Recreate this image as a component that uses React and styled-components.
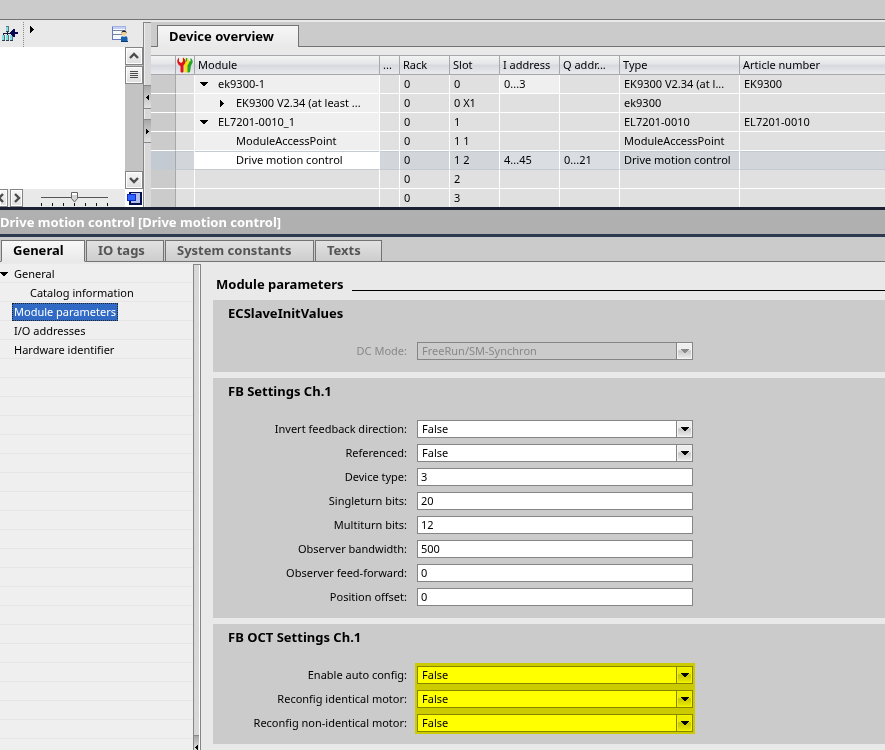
import React, { useState } from 'react';
import styled, { createGlobalStyle, css } from 'styled-components';

const modules = [
  { name: 'ek9300-1', level: 1, open: true, rack: '0', slot: '0', input: '0...3', output: '', type: 'EK9300 V2.34 (at l...', article: 'EK9300' },
  { name: 'EK9300 V2.34 (at least ...', level: 2, open: false, rack: '0', slot: '0 X1', input: '', output: '', type: 'ek9300', article: '' },
  { name: 'EL7201-0010_1', level: 1, open: true, rack: '0', slot: '1', input: '', output: '', type: 'EL7201-0010', article: 'EL7201-0010' },
  { name: 'ModuleAccessPoint', level: 2, rack: '0', slot: '1 1', input: '', output: '', type: 'ModuleAccessPoint', article: '' },
  { name: 'Drive motion control', level: 2, rack: '0', slot: '1 2', input: '4...45', output: '0...21', type: 'Drive motion control', article: '', selected: true },
  { name: '', rack: '0', slot: '2', input: '', output: '', type: '', article: '' },
  { name: '', rack: '0', slot: '3', input: '', output: '', type: '', article: '' },
];

const tabs = [
  { name: 'General', width: 84 },
  { name: 'IO tags', width: 78 },
  { name: 'System constants', width: 149 },
  { name: 'Texts', width: 67 },
];

const navItems = [
  { name: 'General', open: true },
  { name: 'Catalog information', child: true },
  { name: 'Module parameters' },
  { name: 'I/O addresses' },
  { name: 'Hardware identifier' },
];

const sections = [
  {
    title: 'ECSlaveInitValues',
    fields: [{ id: 'dc-mode', label: 'DC Mode:', options: ['FreeRun/SM-Synchron'], disabled: true }],
  },
  {
    title: 'FB Settings Ch.1',
    fields: [
      { id: 'invert', label: 'Invert feedback direction:', options: ['False', 'True'] },
      { id: 'referenced', label: 'Referenced:', options: ['False', 'True'] },
      { id: 'device-type', label: 'Device type:', value: '3' },
      { id: 'singleturn', label: 'Singleturn bits:', value: '20' },
      { id: 'multiturn', label: 'Multiturn bits:', value: '12' },
      { id: 'bandwidth', label: 'Observer bandwidth:', value: '500' },
      { id: 'feed-forward', label: 'Observer feed-forward:', value: '0' },
      { id: 'offset', label: 'Position offset:', value: '0' },
    ],
  },
  {
    title: 'FB OCT Settings Ch.1',
    marked: true,
    fields: [
      { id: 'auto-config', label: 'Enable auto config:', options: ['False', 'True'] },
      { id: 'identical', label: 'Reconfig identical motor:', options: ['False', 'True'] },
      { id: 'non-identical', label: 'Reconfig non-identical motor:', options: ['False', 'True'] },
    ],
  },
];

const arrows = {
  down: { w: 8, h: 4, d: 'M0 0h8v1h-1v1h-1v1h-1v1h-2v-1h-1v-1h-1v-1h-1z' },
  right: { w: 4, h: 7, d: 'M0 0h1v1h1v1h1v1h1v1h-1v1h-1v1h-1v1h-1z' },
  left: { w: 3, h: 5, d: 'M3 0v5h-1v-1h-1v-1h-1v-1h1v-1h1v-1z' },
  smallRight: { w: 3, h: 5, d: 'M0 0v5h1v-1h1v-1h1v-1h-1v-1h-1v-1z' },
};

const Arrow = ({ dir = 'down' }) => {
  const { w, h, d } = arrows[dir];
  return (
    <svg width={w} height={h} viewBox={`0 0 ${w} ${h}`} fill="currentColor" shapeRendering="crispEdges" aria-hidden="true">
      <path d={d} />
    </svg>
  );
};

const Chevron = ({ d }) => (
  <svg width="12" height="12" viewBox="0 0 12 12" fill="none" stroke="#4c4c4c" strokeWidth="2.4" aria-hidden="true">
    <path d={d} />
  </svg>
);

const NetworkIcon = () => (
  <svg width="16" height="16" viewBox="0 0 16 16" shapeRendering="crispEdges" aria-hidden="true">
    <path d="M4 0h2v5H4zM0 9h2v5H0zM4 9h2v5H4zM8 9h2v5H8z" fill="#7fe0e2" />
    <path d="M4 0h3v1H4zM6 1h1v4H6zM2 9h1v5H2zM6 9h1v5H6zM10 9h1v5h-1z" fill="#5c7480" />
    <path d="M0 14h3v1H0zM4 14h3v1H4zM8 14h3v1H8zM4 5h3v1H4z" fill="#2d3f50" />
    <path d="M5 6h1v3H5zM1 7h8v1H1zM1 8h1v1H1zM9 8h1v1H9z" fill="#111c3c" />
    <path d="M8 6h1V5h1V4h1V3h2v3h3v2h-3v3h-2v-1h-1V9H9V8H8z" fill="#08084e" />
  </svg>
);

const UserViewIcon = () => (
  <svg width="16" height="16" viewBox="0 0 16 16" aria-hidden="true">
    <path d="M0 0h14v14H0z" fill="#f5f8ff" />
    <path d="M0 0h14v3H0z" fill="#c3d0f4" />
    <path d="M.5 0v14M0 13.5h10" stroke="#6577bd" />
    <path d="M0 .5h14M13.5 0v6" stroke="#9fb0e2" />
    <path d="M1 4.500h12M1 8.500h9" stroke="#7a8694" />
    <circle cx="12" cy="7.500" r="2.400" fill="#f0cf91" />
    <path d="M9.500 7.500c-.5-4 5.500-4 5 0l-1-1.500h-3z" fill="#222" />
    <path d="M9 15v-3c0-2 1.500-2 3-1 1.500-1 3-1 3.500 1v3z" fill="#1761ac" />
    <path d="M9 15.500h7" stroke="#0c3c78" />
  </svg>
);

const ToolsIcon = () => (
  <svg width="16" height="16" viewBox="0 0 16 16" aria-hidden="true">
    <path d="M9 1h1.500v3l1.500 1 1.500-1V1C15.500 2 16 4 15.500 6L14 8.500 13 15q-1.500 1-3 0V9L8 6z" fill="#24a52c" />
    <path d="M5.500 1H7v3l1.500 1L10 4V1c2 1 2.500 3 2 5l-1.500 2.500V15q-2 1-3 0V9L5 6z" fill="#f3df12" />
    <path d="M2 .5v4L4 6l2-1.500v-4C8 2 9 4 8 6.500L6.500 8.500V15q-1.500 1-3 0V9C-.5 7-.5 3 2 .5z" fill="#de1518" />
  </svg>
);

const OverviewIcon = () => (
  <svg width="15" height="13" viewBox="0 0 15 13" shapeRendering="crispEdges" aria-hidden="true">
    <path d="M2 0h13v13H2z" fill="#05104f" />
    <path d="M4 1h9v10H4z" fill="#b3bfe8" />
    <path d="M0 2h9v7H0z" fill="#0b2cc4" />
    <path d="M1 3h7v5H1z" fill="#2f62ff" />
  </svg>
);

const SelectField = ({ field }) => (
  <SelectBox $disabled={field.disabled}>
    <select id={field.id} disabled={field.disabled}>
      {field.options.map((option) => (
        <option key={option}>{option}</option>
      ))}
    </select>
    <DropMark>
      <Arrow />
    </DropMark>
  </SelectBox>
);

const DeviceTable = () => (
  <Table>
    <colgroup>
      {[25, 19, 185, 20, 50, 50, 60, 60, 120].map((width, i) => (
        <Col key={i} $width={width} />
      ))}
      <col />
    </colgroup>
    <thead>
      <tr>
        <HeadCell aria-label="Status" />
        <HeadCell $icon aria-label="Diagnostics"><ToolsIcon /></HeadCell>
        <HeadCell>Module</HeadCell>
        <HeadCell>...</HeadCell>
        <HeadCell>Rack</HeadCell>
        <HeadCell>Slot</HeadCell>
        <HeadCell>I address</HeadCell>
        <HeadCell>Q addr...</HeadCell>
        <HeadCell>Type</HeadCell>
        <HeadCell>Article number</HeadCell>
      </tr>
    </thead>
    <tbody>
      {modules.map((row) => (
        <Row key={row.slot} $selected={row.selected}>
          <Cell $tone="gutter" />
          <Cell />
          <Cell $tone={row.name ? 'name' : ''}>
            {row.name && (
              <TreeName $level={row.level}>
                <span>{row.open !== undefined && <Arrow dir={row.open ? 'down' : 'right'} />}</span>
                {row.name}
              </TreeName>
            )}
          </Cell>
          <Cell />
          <Cell>{row.rack}</Cell>
          <Cell>{row.slot}</Cell>
          <Cell $tone={row.input ? 'address' : ''}>{row.input}</Cell>
          <Cell $tone={row.output ? 'address' : ''}>{row.output}</Cell>
          <Cell>{row.type}</Cell>
          <Cell>{row.article}</Cell>
        </Row>
      ))}
    </tbody>
  </Table>
);

const App = () => {
  const [activeTab, setActiveTab] = useState('General');
  const [activeItem, setActiveItem] = useState('Module parameters');
  const [zoom, setZoom] = useState(3);

  return (
    <Page>
      <GlobalStyle />
      <TopBand />
      <DeviceArea>
        <ViewPane>
          <ViewToolbar>
            <IconButton aria-label="Show network"><NetworkIcon /></IconButton>
            <ToolDivider />
            <IconButton aria-label="More tools"><Arrow dir="right" /></IconButton>
            <Spacer />
            <IconButton aria-label="Save view"><UserViewIcon /></IconButton>
          </ViewToolbar>
          <Canvas>
            <ScrollColumn>
              <ScrollButton aria-label="Scroll up"><Chevron d="M2 8l4-4 4 4" /></ScrollButton>
              <ScrollButton aria-label="Scroll position">
                <svg width="8" height="8" viewBox="0 0 8 8" stroke="#4c4c4c" aria-hidden="true">
                  <path d="M0 .5h8M0 2.5h8M0 4.5h8M0 6.5h8" />
                </svg>
              </ScrollButton>
              <Spacer />
              <ScrollButton aria-label="Scroll down"><Chevron d="M2 4l4 4 4-4" /></ScrollButton>
            </ScrollColumn>
          </Canvas>
          <ViewFooter>
            <StepButton $first aria-label="Scroll left"><Chevron d="M8 2L4 6l4 4" /></StepButton>
            <StepButton aria-label="Scroll right"><Chevron d="M4 2l4 4-4 4" /></StepButton>
            <ZoomBox>
              <ZoomSlider
                type="range"
                min="0"
                max="6"
                value={zoom}
                aria-label="Zoom"
                onChange={(e) => setZoom(Number(e.target.value))}
              />
              <svg width="67" height="3" viewBox="0 0 67 3" shapeRendering="crispEdges" aria-hidden="true">
                <path d="M.5 0v3M11.500 0v3M22.500 0v3M33.500 0v3M44.500 0v3M55.500 0v3M66.500 0v3" stroke="#111" />
              </svg>
            </ZoomBox>
            <Spacer />
            <OverviewButton aria-label="Overview"><OverviewIcon /></OverviewButton>
          </ViewFooter>
        </ViewPane>
        <Splitter>
          <SplitHandle aria-label="Collapse view"><Arrow dir="left" /></SplitHandle>
          <SplitHandle aria-label="Expand view"><Arrow dir="smallRight" /></SplitHandle>
        </Splitter>
        <Overview>
          <OverviewTabs>
            <OverviewTab>Device overview</OverviewTab>
          </OverviewTabs>
          <DeviceTable />
        </Overview>
      </DeviceArea>

      <TitleBar>Drive motion control [Drive motion control]</TitleBar>
      <TabBar>
        {tabs.map((tab) => (
          <Tab key={tab.name} $width={tab.width} $active={tab.name === activeTab} onClick={() => setActiveTab(tab.name)}>
            {tab.name}
          </Tab>
        ))}
      </TabBar>

      <Properties>
        <Nav>
          {navItems.map((item) => (
            <NavRow key={item.name} $child={item.child}>
              <NavArrow>{item.open && <Arrow />}</NavArrow>
              <NavLink
                href="#"
                $active={item.name === activeItem}
                onClick={(e) => {
                  e.preventDefault();
                  setActiveItem(item.name);
                }}
              >
                {item.name}
              </NavLink>
            </NavRow>
          ))}
        </Nav>
        <NavSplitter>
          <NavHandle aria-label="Collapse navigation"><Arrow dir="left" /></NavHandle>
        </NavSplitter>
        <Content>
          <ContentTitle>Module parameters</ContentTitle>
          {sections.map((section) => (
            <Section key={section.title}>
              <SectionTitle>{section.title}</SectionTitle>
              <Fields $marked={section.marked}>
                {section.fields.map((field) => (
                  <Field key={field.id}>
                    <Label htmlFor={field.id} $disabled={field.disabled}>{field.label}</Label>
                    {field.options ? <SelectField field={field} /> : <TextInput id={field.id} defaultValue={field.value} />}
                  </Field>
                ))}
              </Fields>
            </Section>
          ))}
        </Content>
      </Properties>
    </Page>
  );
};

export default App;

const GlobalStyle = createGlobalStyle`
  * {
    box-sizing: border-box;
  }
  body {
    margin: 0;
    background: #e9e9e9;
    color: #000;
    font-family: 'Noto Sans', 'DejaVu Sans', sans-serif;
    font-size: 11px;
    line-height: 16px;
  }
  button, input, select {
    margin: 0;
    font: inherit;
    color: inherit;
    border-radius: 0;
  }
  svg {
    display: block;
    flex: none;
  }
`;

const Page = styled.div`
  display: flex;
  flex-direction: column;
  min-height: 100vh;
  overflow: hidden;
`;

const Spacer = styled.div`
  flex: 1;
`;

const TopBand = styled.div`
  height: 20px;
  background: #cbcbcb;
  border-bottom: 1px solid #737373;
`;

const DeviceArea = styled.div`
  display: flex;
  padding-top: 2px;
  border-bottom: 3px solid #1b2133;
`;

const ViewPane = styled.div`
  display: flex;
  flex-direction: column;
  width: 143px;
  flex: none;
`;

const ViewToolbar = styled.div`
  display: flex;
  height: 25px;
  padding: 0 15px 0 2px;
`;

const IconButton = styled.button`
  display: flex;
  align-items: flex-start;
  padding: 4px 0 0;
  border: 0;
  background: none;
`;

const ToolDivider = styled.div`
  margin: 0 6px 0 5px;
  border-left: 1px dotted #888;
`;

const Canvas = styled.div`
  display: flex;
  justify-content: flex-end;
  flex: 1;
  background: #fff;
`;

const ScrollColumn = styled.div`
  display: flex;
  flex-direction: column;
  gap: 1px;
  width: 18px;
  background: #c3c3c3;
`;

const ScrollButton = styled.button`
  display: flex;
  align-items: center;
  justify-content: center;
  width: 18px;
  height: 18px;
  padding: 0;
  border: 1px solid #858585;
  background: linear-gradient(#f6f6f6, #dedede);
  box-shadow: inset 0 0 0 1px #fff;
`;

const ViewFooter = styled.div`
  display: flex;
  height: 18px;
`;

const StepButton = styled(ScrollButton)`
  width: 13px;
  margin-left: 2px;
  overflow: hidden;
  ${({ $first }) => $first && css`
    width: 8px;
    margin-left: 0;
    border-left: 0;
    justify-content: flex-end;
  `}
`;

const ZoomBox = styled.div`
  display: flex;
  flex-direction: column;
  align-items: center;
  width: 75px;
  margin-left: 14px;
  padding-top: 3px;
`;

const ZoomSlider = styled.input`
  appearance: none;
  width: 75px;
  height: 11px;
  background: linear-gradient(#555, #555) center / 67px 1px no-repeat;

  &::-webkit-slider-thumb {
    appearance: none;
    width: 9px;
    height: 11px;
    background: url("data:image/svg+xml,%3Csvg xmlns='http://www.w3.org/2000/svg' width='9' height='11'%3E%3Cpath d='M1.500 .5h6v6l-3 3.500-3-3.500z' fill='%23d4d4d4' stroke='%23666'/%3E%3Cpath d='M2 1h5v2H2z' fill='%23fff'/%3E%3C/svg%3E") no-repeat;
  }
`;

const OverviewButton = styled.button`
  display: flex;
  align-items: center;
  justify-content: center;
  width: 18px;
  padding: 0;
  border: 0;
  background: #fff;
`;

const Splitter = styled.div`
  display: flex;
  flex-direction: column;
  gap: 10px;
  width: 8px;
  padding-top: 62px;
  flex: none;
  border-top: 1px solid #858585;
  border-left: 1px solid #858585;
  background: #d8d8d8;
  box-shadow: inset 1px 0 0 #eee;
`;

const SplitHandle = styled.button`
  display: flex;
  align-items: center;
  justify-content: center;
  width: 7px;
  height: 24px;
  padding: 0;
  overflow: hidden;
  border: solid #888;
  border-width: 1px 0;
  background: linear-gradient(#a8a8a8, #e2e2e2);
`;

const Overview = styled.div`
  flex: 1;
  min-width: 0;
`;

const OverviewTabs = styled.div`
  display: flex;
  height: 25px;
  margin-bottom: 8px;
  padding: 3px 6px 0;
  background: #cbcbcb;
  box-shadow: inset 0 -1px 0 #737373;
`;

const OverviewTab = styled.button`
  width: 142px;
  padding: 0 0 2px 11px;
  border: 1px solid #737373;
  border-bottom: 0;
  background: linear-gradient(#f6f6f6, #e9e9e9);
  font-size: 13px;
  font-weight: 700;
  line-height: 18px;
  text-align: left;
`;

const Table = styled.table`
  width: 100%;
  table-layout: fixed;
  border-spacing: 0;
`;

const Col = styled.col`
  width: ${({ $width }) => $width}px;
`;

const HeadCell = styled.th`
  height: 20px;
  padding: ${({ $icon }) => ($icon ? '0 1px' : '0 3px')};
  overflow: hidden;
  border: solid #a8a8ac;
  border-width: 1px 1px 1px 0;
  background: linear-gradient(#f3f3f3 0%, #e4e5e7 45%, #d5d8de 50%, #e8eaed 100%);
  font-weight: 400;
  text-align: left;
  white-space: nowrap;

  &:last-child {
    border-right: 0;
  }
`;

const tones = {
  gutter: ['#cbcbcb', '#c3cad2'],
  name: ['#efefef', '#fff'],
  address: ['#efefef', '#dadde2'],
};

const Cell = styled.td`
  height: 19px;
  padding: 0 4px;
  overflow: hidden;
  border: solid #fff;
  border-width: 0 1px 1px 0;
  background: ${({ $tone }) => (tones[$tone] || ['#e0e0e0'])[0]};
  white-space: nowrap;
  ${({ $tone }) => $tone === 'gutter' && css`
    border-right-color: #a8a8a8;
  `}
  ${({ $tone }) => $tone === 'name' && css`
    padding: 0;
  `}

  &:last-child {
    border-right: 0;
  }
`;

const Row = styled.tr`
  &:last-child ${Cell} {
    height: 18px;
    border-bottom: 0;
  }
  ${({ $selected }) => $selected && css`
    ${Cell} {
      background: #d2d6da;
      border-bottom-color: #c3cad2;
      box-shadow: inset 0 1px 0 #c3cad2;
    }
    ${Cell}:nth-child(1) {
      background: ${tones.gutter[1]};
    }
    ${Cell}:nth-child(3) {
      background: ${tones.name[1]};
    }
    ${Cell}:nth-child(7), ${Cell}:nth-child(8) {
      background: ${tones.address[1]};
    }
  `}
`;

const TreeName = styled.div`
  display: flex;
  align-items: center;
  padding-left: ${({ $level }) => ($level === 1 ? 5 : 23)}px;

  span {
    width: 18px;
    padding-left: ${({ $level }) => ($level === 1 ? 0 : 2)}px;
  }
`;

const TitleBar = styled.h1`
  height: 27px;
  margin: 0;
  background: #b0b0b0;
  border-bottom: 3px solid #2d3950;
  color: #fff;
  font-size: 13px;
  font-weight: 700;
  line-height: 24px;
  white-space: nowrap;
`;

const TabBar = styled.div`
  display: flex;
  gap: 1px;
  height: 25px;
  padding: 3px 1px 0;
  background: #cbcbcb;
  box-shadow: inset 0 -1px 0 #737373;
`;

const Tab = styled.button`
  width: ${({ $width }) => $width}px;
  padding: 0 0 2px 11px;
  border: 1px solid #737373;
  background: linear-gradient(#e2e2e2, #cdcdcd);
  color: #555;
  font-size: 13px;
  font-weight: 700;
  line-height: 18px;
  text-align: left;
  white-space: nowrap;
  ${({ $active }) => $active && css`
    border-bottom-color: #e9e9e9;
    background: linear-gradient(#f8f8f8, #e9e9e9);
    color: #000;
  `}
`;

const Properties = styled.div`
  display: flex;
  flex: 1;
  padding-top: 2px;
`;

const Nav = styled.nav`
  width: 193px;
  flex: none;
  background: repeating-linear-gradient(#efefef 0 18px, #e6e6e6 18px 19px);
`;

const NavRow = styled.div`
  display: flex;
  align-items: center;
  height: 19px;
  padding-left: ${({ $child }) => ($child ? 16 : 0)}px;
`;

const NavArrow = styled.span`
  width: 12px;
`;

const NavLink = styled.a`
  padding: 0 1px;
  border: 1px dotted transparent;
  color: inherit;
  text-decoration: none;
  ${({ $active }) => $active && css`
    border-color: #222;
    background: #316ac5;
    color: #fff;
  `}
`;

const NavSplitter = styled.div`
  display: flex;
  align-items: flex-end;
  width: 8px;
  flex: none;
  border: 1px solid #858585;
  border-bottom: 0;
  background: #d8d8d8;
  box-shadow: inset -1px 0 0 #fff;
`;

const NavHandle = styled(SplitHandle)`
  width: 5px;
  height: 15px;
  padding-top: 8px;
  border-bottom: 0;
`;

const Content = styled.main`
  display: flex;
  flex-direction: column;
  gap: 6px;
  flex: 1;
  min-width: 0;
  padding: 10px 0 6px 12px;
`;

const ContentTitle = styled.h2`
  display: flex;
  align-items: center;
  gap: 8px;
  height: 20px;
  margin: 0;
  padding-left: 3px;
  font-size: 13px;
  font-weight: 700;

  &::after {
    content: '';
    flex: 1;
    height: 12px;
    border-bottom: 1px solid #000;
  }
`;

const Section = styled.section`
  padding-bottom: 9px;
  background: #cbcbcb;
`;

const SectionTitle = styled.h3`
  margin: 0;
  padding: 3px 15px 16px;
  font-size: 13px;
  font-weight: 700;
  line-height: 20px;
`;

const Fields = styled.div`
  position: relative;
  ${({ $marked }) => $marked && css`
    &::after {
      content: '';
      position: absolute;
      inset: 0 auto 1px 202px;
      width: 280px;
      background: #ff0;
      mix-blend-mode: multiply;
      pointer-events: none;
    }
  `}
`;

const Field = styled.div`
  display: grid;
  grid-template-columns: 194px 276px;
  align-items: center;
  column-gap: 10px;
  height: 24px;
`;

const Label = styled.label`
  color: ${({ $disabled }) => ($disabled ? '#888' : '#000')};
  text-align: right;
  white-space: nowrap;
`;

const TextInput = styled.input`
  width: 100%;
  height: 18px;
  padding: 0 3px 2px;
  border: 1px solid #858585;
  background: #fff;
  outline: 0;
`;

const SelectBox = styled.div`
  position: relative;
  height: 18px;
  color: ${({ $disabled }) => ($disabled ? '#888' : '#000')};

  select {
    appearance: none;
    width: 100%;
    height: 18px;
    padding: 0 20px 0 4px;
    border: 1px solid #858585;
    background: ${({ $disabled }) => ($disabled ? '#cbcbcb' : '#fff')};
    color: inherit;
    opacity: 1;
    outline: 0;
  }
`;

const DropMark = styled.span`
  position: absolute;
  top: 0;
  right: 0;
  display: flex;
  align-items: center;
  justify-content: center;
  width: 17px;
  height: 18px;
  border: 1px solid #858585;
  background: linear-gradient(#eee 0 40%, #c8c8c8 50%, #eee);
  box-shadow: inset 0 0 0 1px #f4f4f4;
  pointer-events: none;
`;
